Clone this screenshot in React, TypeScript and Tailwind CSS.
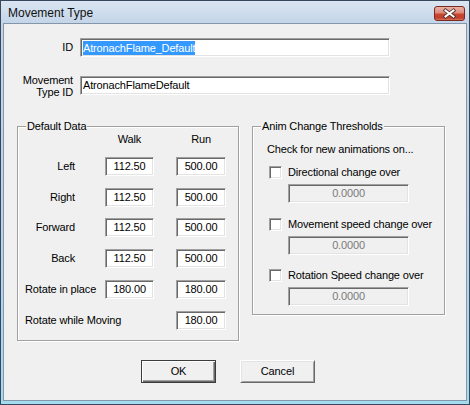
import React from "react";

const sunken =
  "border border-t-[#a0a0a0] border-l-[#a0a0a0] border-r-white border-b-white shadow-[inset_1px_1px_0_#696969,inset_-1px_-1px_0_#e3e3e3]";

function Box({ className, children }: { className: string; children: React.ReactNode }) {
  return (
    <div className={`h-[19px] bg-white flex items-center justify-center ${sunken} ${className}`}>
      {children}
    </div>
  );
}

function DataRow({
  label,
  walk,
  run,
  left,
  mt,
}: {
  label: string;
  walk?: string;
  run: string;
  left?: boolean;
  mt: string;
}) {
  return (
    <div className={`flex items-center h-[19px] ${mt}`}>
      <div
        className={`w-[87px] min-w-0 shrink-0 whitespace-nowrap ${
          left ? "pl-[7px] text-left" : "pr-[30px] text-right"
        }`}
      >
        {label}
      </div>
      {walk ? <Box className="w-[49px] shrink-0">{walk}</Box> : <div className="w-[49px] shrink-0" />}
      <div className="w-[22px] shrink-0" />
      <Box className="w-[50px] shrink-0">{run}</Box>
    </div>
  );
}

function Check({ label, mt }: { label: string; mt: string }) {
  return (
    <div className={`flex items-center h-[13px] pl-[16px] ${mt}`}>
      <div className={`w-[13px] h-[13px] bg-white shrink-0 ${sunken}`} />
      <span className="ml-[6px] whitespace-nowrap">{label}</span>
    </div>
  );
}

function Disabled() {
  return (
    <div
      className={`mt-[5px] ml-[35px] w-[121px] h-[19px] bg-[#f0f0f0] flex items-center justify-center text-[#7a7a7a] ${sunken}`}
    >
      0.0000
    </div>
  );
}

export default function App() {
  return (
    <div className="w-[470px] h-[405px] flex flex-col border border-[#37485c] bg-[linear-gradient(to_bottom,#dae5f2_0px,#c4d5e8_22px,#bdd2e8_200px,#a3dbef_100%)] font-['Liberation_Sans',Arial,sans-serif] text-black overflow-hidden">
      {/* Title bar */}
      <div className="h-[22px] shrink-0 flex items-center justify-between pl-[7px] pr-[4px]">
        <span className="text-[12px] leading-[14px] text-[#111] mt-[2px]">Movement Type</span>
        <div className="w-[31px] h-[15px] rounded-[3px] border border-[#7a2a1e] bg-[linear-gradient(to_bottom,#eab2a5_0%,#dc8b7b_45%,#c9472f_55%,#c0402c_85%,#d77a5f_100%)] flex items-center justify-center mt-[2px]">
          <svg width="29" height="13" viewBox="0 0 29 13">
            <path d="M10.5 3.5 L18.5 9.5 M18.5 3.5 L10.5 9.5" stroke="#4a2a26" strokeWidth="3.6" strokeLinecap="square" />
            <path d="M10.5 3.5 L18.5 9.5 M18.5 3.5 L10.5 9.5" stroke="#ffffff" strokeWidth="2" strokeLinecap="square" />
          </svg>
        </div>
      </div>

      {/* Content */}
      <div className="flex-1 mx-[2px] mb-[3px] bg-[#f0f0f0] border border-[#8396ab] flex flex-col text-[11px] leading-[13px] tracking-[-0.15px]">
        {/* ID row */}
        <div className="mt-[14px] flex items-center h-[19px]">
          <div className="w-[69px] text-right">ID</div>
          <div className={`ml-[7px] w-[310px] h-[19px] bg-white flex items-center pl-[2px] ${sunken}`}>
            <span className="bg-[#3399ff] text-white leading-[14px]">AtronachFlame_Default</span>
          </div>
        </div>

        {/* Movement Type ID row */}
        <div className="mt-[19px] flex items-center h-[19px]">
          <div className="w-[69px] text-right leading-[12px] h-[19px] flex flex-col justify-center items-end">
            <span>Movement</span>
            <span>Type ID</span>
          </div>
          <div className={`ml-[7px] w-[310px] h-[19px] bg-white flex items-center pl-[2px] ${sunken}`}>
            AtronachFlameDefault
          </div>
        </div>

        {/* Groups */}
        <div className="mt-[31px] flex items-start pl-[13px] gap-[13px]">
          {/* Default Data */}
          <div className="relative w-[222px] h-[215px] border border-[#a0a0a0] shadow-[inset_1px_1px_0_#fff,1px_1px_0_#fff] flex flex-col">
            <span className="absolute top-[-7px] left-[8px] px-[1px] bg-[#f0f0f0] whitespace-nowrap">Default Data</span>
            <div className="mt-[6px] flex h-[13px]">
              <div className="w-[87px] shrink-0" />
              <div className="w-[49px] text-center">Walk</div>
              <div className="w-[22px]" />
              <div className="w-[50px] text-center">Run</div>
            </div>
            <DataRow mt="mt-[11px]" label="Left" walk="112.50" run="500.00" />
            <DataRow mt="mt-[12px]" label="Right" walk="112.50" run="500.00" />
            <DataRow mt="mt-[11px]" label="Forward" walk="112.50" run="500.00" />
            <DataRow mt="mt-[12px]" label="Back" walk="112.50" run="500.00" />
            <DataRow mt="mt-[12px]" label="Rotate in place" walk="180.00" run="180.00" left />
            <DataRow mt="mt-[12px]" label="Rotate while Moving" run="180.00" left />
          </div>

          {/* Anim Change Thresholds */}
          <div className="relative w-[193px] h-[189px] border border-[#a0a0a0] shadow-[inset_1px_1px_0_#fff,1px_1px_0_#fff] flex flex-col">
            <span className="absolute top-[-7px] left-[8px] px-[1px] bg-[#f0f0f0] whitespace-nowrap">
              Anim Change Thresholds
            </span>
            <div className="mt-[16px] pl-[14px] h-[13px] whitespace-nowrap">Check for new animations on...</div>
            <Check mt="mt-[10px]" label="Directional change over" />
            <Disabled />
            <Check mt="mt-[15px]" label="Movement speed change over" />
            <Disabled />
            <Check mt="mt-[14px]" label="Rotation Speed change over" />
            <Disabled />
          </div>
        </div>

        {/* Buttons */}
        <div className="mt-[19px] flex pl-[137px] gap-[24px]">
          <div className="w-[75px] h-[23px] flex items-center justify-center border border-[#3c3c3c] bg-[#f0f0f0] shadow-[inset_1px_1px_0_#fff,inset_-1px_-1px_0_#696969,inset_-2px_-2px_0_#a0a0a0]">
            OK
          </div>
          <div className="w-[75px] h-[23px] flex items-center justify-center border border-t-white border-l-white border-r-[#696969] border-b-[#696969] bg-[#f0f0f0] shadow-[inset_1px_1px_0_#e3e3e3,inset_-1px_-1px_0_#a0a0a0]">
            Cancel
          </div>
        </div>
      </div>
    </div>
  );
}
